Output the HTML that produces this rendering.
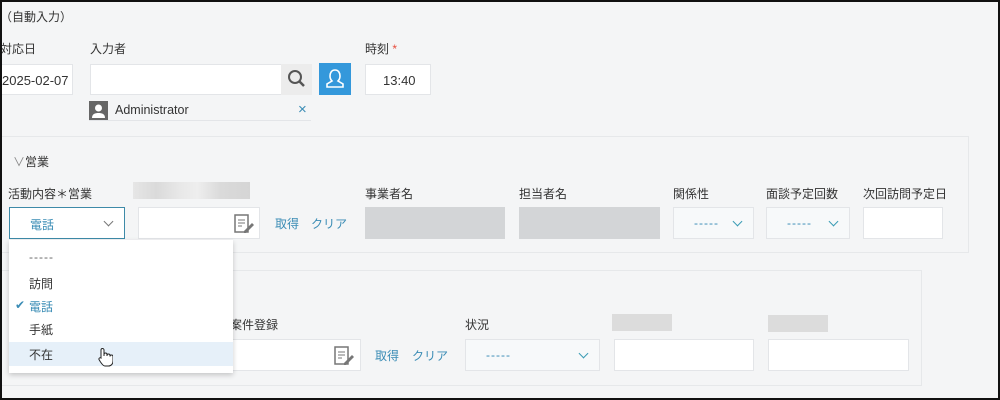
<!DOCTYPE html>
<html><head><meta charset="utf-8"><style>
*{box-sizing:border-box;margin:0;padding:0}
body{width:1000px;height:400px;overflow:hidden;background:#f4f5f6;font-family:"Liberation Sans","Noto Sans CJK JP",sans-serif;font-size:12px;color:#333;position:relative}
.frame{position:absolute;left:0;top:0;width:1000px;height:400px;border:2px solid #111;border-right-width:2px;pointer-events:none;z-index:10}
.a{position:absolute}
.in{position:absolute;background:#fff;border:1px solid #e3e5e8}
.lbl{position:absolute;font-size:12px;color:#333;white-space:nowrap}
.link{position:absolute;color:#3a8cb5;font-size:12px}
.blur{position:absolute;background:#dcdcdc;height:17px}
.sel{position:absolute;background:#f7f9fa;border:1px solid #e3e5e8;color:#3a8cb5}
.sel .d{position:absolute;left:18px;top:8px;letter-spacing:1px}
.chev{position:absolute;width:7px;height:7px;border-right:1px solid #3a9cb5;border-bottom:1px solid #3a9cb5;transform:rotate(45deg)}
.panel{position:absolute;border:1px solid #e6e8ea;background:#f4f5f6}
.dd{position:absolute;left:9px;top:240px;width:224px;height:133px;background:#fff;box-shadow:0 2px 5px rgba(0,0,0,.2);z-index:5}
.dd div{position:absolute;left:20px;font-size:12px}
</style></head><body>
<div class="frame"></div>
<div class="lbl" style="left:0;top:8px">（自動入力）</div>
<div class="lbl" style="left:0;top:40px">対応日</div>
<div class="lbl" style="left:90px;top:40px">入力者</div>
<div class="lbl" style="left:365px;top:40px">時刻 <span style="color:#e74c3c">*</span></div>
<div class="in" style="left:0;top:64px;width:73px;height:31px;border-left:none"><span class="a" style="left:2px;top:8px;font-size:13px">2025-02-07</span></div>
<div class="in" style="left:90px;top:64px;width:192px;height:31px"></div>
<div class="a" style="left:281px;top:64px;width:31px;height:31px;background:#ececec">
<svg width="31" height="31"><circle cx="14" cy="13" r="6" fill="none" stroke="#555" stroke-width="2"/><line x1="18.5" y1="17.5" x2="23" y2="22" stroke="#555" stroke-width="2.5"/></svg></div>
<div class="a" style="left:319px;top:63px;width:32px;height:32px;background:#3498db">
<svg width="32" height="32"><path d="M16 7c-3.5 0-5 3-5 6s2 5 2 5l-5 3v3h16v-3l-5-3s2-2 2-5-1.5-6-5-6z" fill="none" stroke="#fff" stroke-width="1.6"/></svg></div>
<div class="in" style="left:365px;top:64px;width:66px;height:31px"><span class="a" style="left:17px;top:8px;font-size:13px">13:40</span></div>
<div class="a" style="left:89px;top:101px;width:222px;height:20px;border-bottom:1px solid #e3e5e8"></div>
<div class="a" style="left:89px;top:101px;width:19px;height:19px;background:#666"><svg width="19" height="19"><circle cx="9.5" cy="7" r="3.5" fill="#fff"/><path d="M3 17c0-4 3-5 6.5-5s6.5 1 6.5 5z" fill="#fff"/></svg></div>
<div class="lbl" style="left:115px;top:103px;font-size:12.5px">Administrator</div>
<div class="a" style="left:298px;top:101px;color:#3a8cb5;font-size:15px">×</div>

<div class="panel" style="left:-1px;top:136px;width:970px;height:117px"></div>
<div class="lbl" style="left:13px;top:153px"><span style="color:#888">∨</span>営業</div>
<div class="lbl" style="left:8px;top:185px">活動内容＊営業</div>
<div class="blur" style="left:133px;top:182px;width:117px;background:linear-gradient(90deg,#e6e6e6,#dadada 20%,#e8e8e8 40%,#eee 55%,#dadada 75%,#d5d5d5)"></div>
<div class="lbl" style="left:365px;top:185px">事業者名</div>
<div class="lbl" style="left:519px;top:185px">担当者名</div>
<div class="lbl" style="left:673px;top:185px">関係性</div>
<div class="lbl" style="left:766px;top:185px">面談予定回数</div>
<div class="lbl" style="left:863px;top:185px">次回訪問予定日</div>
<div class="sel" style="left:9px;top:207px;width:116px;height:32px;border-color:#3d8aa8;background:#fff"><span class="a" style="left:20px;top:8px">電話</span><div class="chev" style="left:95px;top:10px;border-color:#777"></div></div>
<div class="in" style="left:138px;top:207px;width:122px;height:32px"><svg class="a" style="left:95px;top:6px" width="22" height="20"><rect x="1" y="1" width="13" height="17" fill="none" stroke="#777" stroke-width="1.5"/><path d="M4 6h7M4 9h7M4 12h4" stroke="#777"/><path d="M10 17l8-8 2 2-8 8h-2z" fill="#777"/></svg></div>
<div class="link" style="left:275px;top:215px">取得</div>
<div class="link" style="left:311px;top:215px">クリア</div>
<div class="a" style="left:365px;top:207px;width:140px;height:32px;background:#d3d5d7"></div>
<div class="a" style="left:519px;top:207px;width:141px;height:32px;background:#d3d5d7"></div>
<div class="sel" style="left:673px;top:207px;width:81px;height:32px"><span class="d" style="left:20px">-----</span><div class="chev" style="left:60px;top:10px"></div></div>
<div class="sel" style="left:766px;top:207px;width:84px;height:32px"><span class="d" style="left:20px">-----</span><div class="chev" style="left:63px;top:10px"></div></div>
<div class="in" style="left:863px;top:207px;width:80px;height:32px"></div>

<div class="panel" style="left:-1px;top:270px;width:923px;height:116px"></div>
<div class="lbl" style="left:230px;top:316px">案件登録</div>
<div class="lbl" style="left:465px;top:316px">状況</div>
<div class="blur" style="left:612px;top:314px;width:60px"></div>
<div class="blur" style="left:768px;top:315px;width:60px"></div>
<div class="in" style="left:228px;top:339px;width:133px;height:32px"><svg class="a" style="left:105px;top:6px" width="22" height="20"><rect x="1" y="1" width="13" height="17" fill="none" stroke="#777" stroke-width="1.5"/><path d="M4 6h7M4 9h7M4 12h4" stroke="#777"/><path d="M10 17l8-8 2 2-8 8h-2z" fill="#777"/></svg></div>
<div class="link" style="left:375px;top:347px">取得</div>
<div class="link" style="left:412px;top:347px">クリア</div>
<div class="sel" style="left:465px;top:339px;width:135px;height:32px"><span class="d" style="left:20px">-----</span><div class="chev" style="left:114px;top:10px"></div></div>
<div class="in" style="left:614px;top:339px;width:140px;height:32px"></div>
<div class="in" style="left:768px;top:339px;width:141px;height:32px"></div>

<div class="dd">
<div style="top:10px;color:#666;letter-spacing:1px">-----</div>
<div style="top:35px">訪問</div>
<div style="left:6px;top:58px;color:#3a8cb5">✔</div>
<div style="top:58px;color:#3a8cb5">電話</div>
<div style="top:81px">手紙</div>
<div style="left:0;top:102px;width:224px;height:24px;background:#e6f0f9"></div>
<div style="top:106px">不在</div>
<svg style="position:absolute;left:88px;top:107px" width="16" height="20"><path d="M4 11V3a1.5 1.5 0 013 0v6V7.5a1.5 1.5 0 013 0V9 8.5a1.5 1.5 0 013 0v1a1.5 1.5 0 013 0V14c0 3-2 5-4.5 5H8c-2 0-3-2-4.5-4L2 12.5a1.3 1.3 0 012-1.5z" fill="#fff" stroke="#222" stroke-width="1"/></svg>
</div>
</body></html>
